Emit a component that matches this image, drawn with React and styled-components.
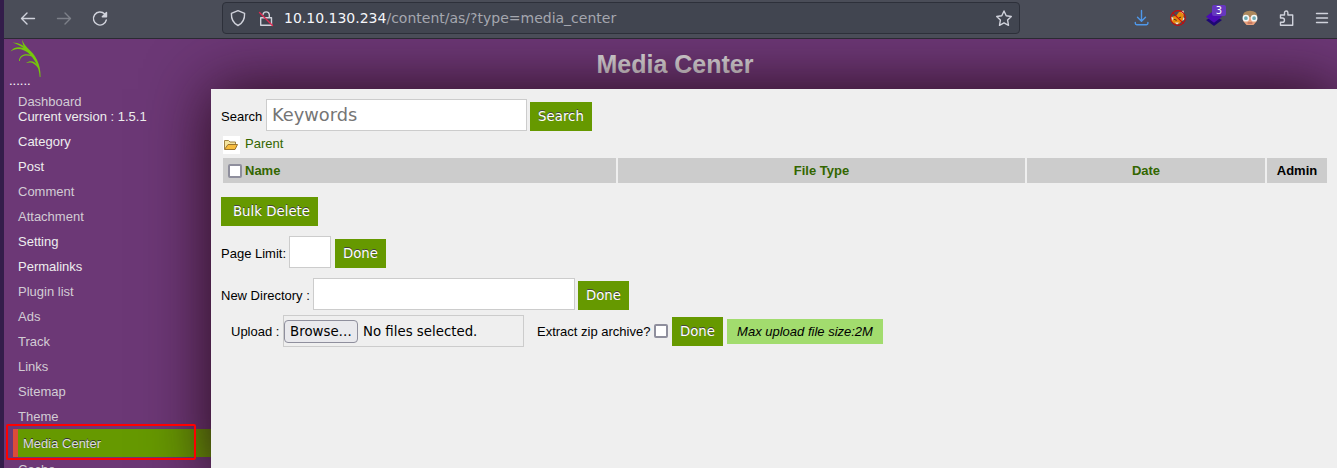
import React from "react";
import styled, { createGlobalStyle } from "styled-components";

const Global = createGlobalStyle`
  * { box-sizing: border-box; }
  html, body, #root { height: 100%; }
  body { margin: 0; overflow: hidden; background: #331d4a; font: 13px/15px "Liberation Sans", Arial, sans-serif; color: #000; }
`;

const Window = styled.div`
  height: 468px;
  padding-left: 4px;
  display: flex;
  flex-direction: column;
  overflow: hidden;
`;
const Toolbar = styled.header`
  flex: none;
  height: 39px;
  background: #4a4d58;
  border-bottom: 1px solid #2b2a33;
  display: flex;
  align-items: center;
  padding: 0 5px 2px 14px;
`;
const NavButtons = styled.nav`
  display: flex;
  gap: 16px;
  width: 204px;
`;
const AddressBar = styled.div`
  width: 798px;
  height: 32px;
  margin-top: -1px;
  border: 1px solid #2d303a;
  border-radius: 4px;
  background: #414550;
  display: flex;
  align-items: center;
  padding: 0 5px 0 5px;
`;
const Url = styled.div`
  flex: 1;
  margin-left: 8px;
  font: 14px/20px "DejaVu Sans", sans-serif;
  color: #a5a7af;
  b { font-weight: 400; color: #f5f6fa; }
`;
const Extensions = styled.div`
  display: flex;
  gap: 16px;
  margin-left: auto;
`;
const IconBox = styled.span`
  position: relative;
  width: 20px;
  height: 20px;
  margin-left: ${(p) => p.$gap || 0}px;
  svg { display: block; overflow: visible; }
`;
const CountBadge = styled.span`
  position: absolute;
  left: 8px;
  top: -3px;
  width: 14px;
  height: 11px;
  border-radius: 2px;
  background: #6637be;
  color: #fff;
  font: 10px/11px "DejaVu Sans", sans-serif;
  text-align: center;
`;

const Page = styled.div`
  flex: 1;
  min-height: 0;
  display: grid;
  grid-template-columns: 207px 1fr;
  grid-template-rows: 50px 1fr;
  background: #6c3876;
  overflow: hidden;
`;
const Brand = styled.div`
  padding: 0 0 0 5px;
  color: #fff;
  line-height: 13px;
  svg { display: block; margin-bottom: -3px; }
`;
const Title = styled.h1`
  margin: 0;
  padding-right: 198px;
  text-align: center;
  font-size: 25px;
  line-height: 50px;
  color: #ddd;
`;
const Sidebar = styled.ul`
  list-style: none;
  margin: 0;
  padding: 0 0 0 9px;
`;
const MenuItem = styled.li`
  height: ${(p) => (p.$tall ? 40 : p.$active ? 28 : 25)}px;
  padding: ${(p) => (p.$active ? 7 : 5)}px 5px;
  color: ${(p) => (p.$bright ? "#eee" : "#d2ccd4")};
  ${(p) => p.$active && `background: #690; border-left: 5px solid #dd4b39; text-shadow: 0 -1px 0 #333; color: #ddd;`}
  span { display: block; color: #eee; }
`;
const Marker = styled.div`
  position: absolute;
  z-index: 3;
  left: 6px;
  top: 424px;
  width: 190px;
  height: 36px;
  border: 2px solid #f00;
  border-radius: 2px;
`;
const Content = styled.main`
  position: relative;
  z-index: 1;
  background: #efefef;
  box-shadow: 0 0 60px #280a1a;
  padding: 10px;
`;
const Row = styled.div`
  display: flex;
  align-items: flex-end;
  height: ${(p) => p.$h || 32}px;
  margin-top: ${(p) => p.$top || 0}px;
  padding-left: ${(p) => p.$indent || 0}px;
`;
const Label = styled.label`
  width: ${(p) => p.$w}px;
  line-height: 15px;
  padding-bottom: ${(p) => p.$up || 7}px;
  box-sizing: content-box;
  white-space: nowrap;
  flex: none;
`;
const Field = styled.input`
  width: ${(p) => p.$w}px;
  height: 32px;
  margin-right: ${(p) => p.$gap || 3}px;
  padding: 0 0 1px 5px;
  border: 1px solid #ccc;
  border-radius: 0;
  background: #fff;
  outline: 0;
  font: 17.8px "DejaVu Sans", sans-serif;
  &::placeholder { color: #757575; opacity: 1; }
`;
const Button = styled.button`
  width: ${(p) => p.$w}px;
  height: 29px;
  border: 0;
  margin-bottom: ${(p) => p.$up || 0}px;
  padding: ${(p) => (p.$shift ? "0 0 0 4px" : "0")};
  background: #690;
  color: #fff;
  font: 13.33px/28px "DejaVu Sans", sans-serif;
  text-shadow: 0 -1px 0 #444;
  white-space: nowrap;
`;
const ParentLink = styled.div`
  display: flex;
  align-items: center;
  gap: 5px;
  height: 18px;
  margin: 5px 0 4px 2px;
  color: #360;
  svg { display: block; background: #fff; }
  span { padding-bottom: 4px; }
`;
const TableHead = styled.div`
  display: grid;
  grid-template-columns: 393px 407px 238px 60px;
  gap: 2px;
  height: 25px;
  margin: 0 0 14px 2px;
`;
const HeadCell = styled.div`
  display: flex;
  align-items: center;
  justify-content: ${(p) => (p.$left ? "flex-start" : "center")};
  gap: 3px;
  padding: 0 ${(p) => (p.$left ? 5 : 0)}px;
  background: #ccc;
  color: ${(p) => (p.$plain ? "#000" : "#360")};
  font-weight: 700;
`;
const Check = styled.span`
  flex: none;
  width: 14px;
  height: 14px;
  border: 2px solid #8f8f9d;
  border-radius: 2px;
  background: #fff;
  margin: ${(p) => p.$m || 0};
`;
const FilePicker = styled.div`
  width: 241px;
  height: 32px;
  border: 1px solid #ccc;
  display: flex;
  align-items: center;
  gap: 5px;
  font: 13.33px "DejaVu Sans", sans-serif;
  margin-right: 13px;
`;
const Browse = styled.button`
  width: 74px;
  height: 23px;
  border: 1px solid #8f8f9d;
  border-radius: 4px;
  background: #e9e9ed;
  color: #000;
  padding: 0;
  font: inherit;
  white-space: nowrap;
`;
const Note = styled.em`
  width: 156px;
  height: 25px;
  margin: 0 0 3px 4px;
  background: #a2dc6e;
  text-align: center;
  line-height: 25px;
`;

const line = { fill: "none", stroke: "#d0d2db", strokeWidth: 1.4, strokeLinecap: "round", strokeLinejoin: "round" };
const Icon = ({ children, gap, ...rest }) => (
  <IconBox $gap={gap}><svg width="20" height="20" viewBox="0 0 20 20" {...line} {...rest}>{children}</svg></IconBox>
);

const menu = [
  ["Category", true], ["Post", true], ["Comment"], ["Attachment"], ["Setting", true], ["Permalinks", true],
  ["Plugin list"], ["Ads"], ["Track"], ["Links"], ["Sitemap"], ["Theme"],
];

export default function App() {
  return (
    <Window>
      <Global />
      <Toolbar>
        <NavButtons>
          <Icon><path d="M16.500 10.500H3.500M9 5 3.500 10.500 9 16" /></Icon>
          <Icon stroke="#7d8089"><path d="M3.500 10.500h13M11 5l5.500 5.500L11 16" /></Icon>
          <Icon><path d="M16.300 12A6.500 6.500 0 1 1 14.700 6.100" /><path d="M16.500 4.500v4.200h-4.200z" fill="#d0d2db" /></Icon>
        </NavButtons>
        <AddressBar>
          <Icon><path d="M10 2.700l6.600 2.600c.2 5.600-1.600 9.900-6.600 12.200-5-2.300-6.800-6.600-6.600-12.200z" /></Icon>
          <Icon gap={8}><path d="M4.700 9.800h10.800v7.500H4.700zM7 6.500a3.200 3.200 0 0 1 6.300 0v3.300" /><path d="M3.500 4.500l13 13" stroke="#e22850" /></Icon>
          <Url><b>10.10.130.234</b>/content/as/?type=media_center</Url>
          <Icon><path d="M10 3l2.200 4.800 5.100.7-3.700 3.600.9 5.200-4.500-2.500-4.500 2.500.9-5.200-3.700-3.600 5.100-.7z" /></Icon>
        </AddressBar>
        <Extensions>
          <Icon stroke="#4f98ea"><path d="M9.500 2.500v10.500M5.500 9.200l4 4 4-4M3.300 14.500v.8q0 1.400 1.400 1.400h9.800q1.400 0 1.400-1.400v-.8" /></Icon>
          <Icon stroke="none">
            <path d="M4.500 8.500L8 8l3-4 4-1.500.8 4.500L15 12l-4 4-5-.5-3-3z" fill="#e98a0c" />
            <path d="M12.500 4l3-1.500.5 4zM3 8.500l2.500 1.500L4 13zM7 14.500h4l-2 2.200zM15.500 9l1.200 2-2.200 2z" fill="#e8e4e0" />
            <path d="M6.500 11.500l1.800.7M11 10l1.700-.8" stroke="#3a2a18" strokeWidth="1" />
            <circle cx="10" cy="10" r="7.400" fill="none" stroke="#c80a0a" strokeWidth="1.100" /><path d="M4.800 4.800l10.400 10.400" stroke="#c80a0a" strokeWidth="1.100" />
          </Icon>
          <IconBox>
            <svg width="20" height="20" viewBox="0 0 20 20"><path d="M2 12l8-4 8 4-8 6z" fill="#1e0873" /><path d="M2 8.700L10 2.500l8 6.200-8 6z" fill="#4b0bb4" /></svg>
            <CountBadge>3</CountBadge>
          </IconBox>
          <Icon stroke="none">
            <path d="M3.500 9h13v4.500l-3 3.500h-7l-3-3.500z" fill="#e8a07c" /><path d="M2.700 9q0-6.300 7.300-6.300T17.300 9z" fill="#ac885c" />
            <path d="M8 15h4" stroke="#a95648" strokeWidth="1" />
            <circle cx="5.900" cy="10.200" r="2.600" fill="#6faab2" stroke="#f4f7f7" strokeWidth="1.500" /><circle cx="14.100" cy="10.200" r="2.600" fill="#6faab2" stroke="#f4f7f7" strokeWidth="1.500" />
          </Icon>
          <Icon><path d="M4.500 10V7h4V4.700a1.700 1.700 0 0 1 3.400 0V7h4.800v10.300H4.500v-3h1.800a2.100 2.100 0 0 0 0-4.300z" /></Icon>
          <Icon><path d="M4.500 5.500h11M4.500 10h11M4.500 14.500h11" /></Icon>
        </Extensions>
      </Toolbar>
      <Page>
        <Brand>
          <svg width="36" height="38" viewBox="0 0 36 38" fill="#76c80c">
            <path d="M13 .5c1.500 3.500 3 6 6 9 7 6 13 15 12.500 28.500h-.8C30 28 26 20 18 12.500 14.500 8.500 13.500 5 13 .5z" />
            <path d="M1.500 12.500C5 7.500 12 6.500 20 12l2 4C14 9 7 8.500 1.500 12.500zM3.500 3.500C9 4 14 5.500 18 10l-2 .3C12 7 8 5 3.500 3.500zM23 16.500c-6-3-13-1-13 5.500.500 0 1 0 1-.5.5-5 6-6 12-4zM29.500 28c-3-6-8-7-12.500-4 5-1.500 8-.5 12.500 5.500z" />
          </svg>
          ......
        </Brand>
        <Title>Media Center</Title>
        <Sidebar>
          <MenuItem $tall>Dashboard<span>Current version : 1.5.1</span></MenuItem>
          {menu.map(([name, bright]) => <MenuItem key={name} $bright={bright}>{name}</MenuItem>)}
          <MenuItem $active>Media Center</MenuItem>
          <MenuItem>Cache</MenuItem>
        </Sidebar>
        <Content>
          <Row><Label $w={45}>Search</Label><Field $w={261} placeholder="Keywords" /><Button $w={62}>Search</Button></Row>
          <ParentLink>
            <svg width="17" height="18" viewBox="0 0 17 18">
              <path d="M1.500 13V4.500h4l1.500 1.500h5.500v3" fill="#f5e5a0" stroke="#a18446" />
              <path d="M1.500 13.500L5 8.500h9.500L12 13.500z" fill="#f8bd3e" stroke="#9b7430" />
            </svg>
            <span>Parent</span>
          </ParentLink>
          <TableHead>
            <HeadCell $left><Check />Name</HeadCell>
            <HeadCell>File Type</HeadCell>
            <HeadCell>Date</HeadCell>
            <HeadCell $plain>Admin</HeadCell>
          </TableHead>
          <Row $h={29}><Button $w={97} $shift>Bulk Delete</Button></Row>
          <Row $top={10}><Label $w={68}>Page Limit:</Label><Field $w={42} $gap={4} /><Button $w={51}>Done</Button></Row>
          <Row $top={10}><Label $w={92}>New Directory :</Label><Field $w={262} /><Button $w={51}>Done</Button></Row>
          <Row $top={5} $indent={10}>
            <Label $w={52} $up={8}>Upload :</Label>
            <FilePicker><Browse>Browse…</Browse><span>No files selected.</span></FilePicker>
            <Label $w={117} $up={8}>Extract zip archive?</Label>
            <Check $m="0 4px 9px 0" />
            <Button $w={51} $up={1}>Done</Button>
            <Note>Max upload file size:2M</Note>
          </Row>
        </Content>
      </Page>
      <Marker />
    </Window>
  );
}
